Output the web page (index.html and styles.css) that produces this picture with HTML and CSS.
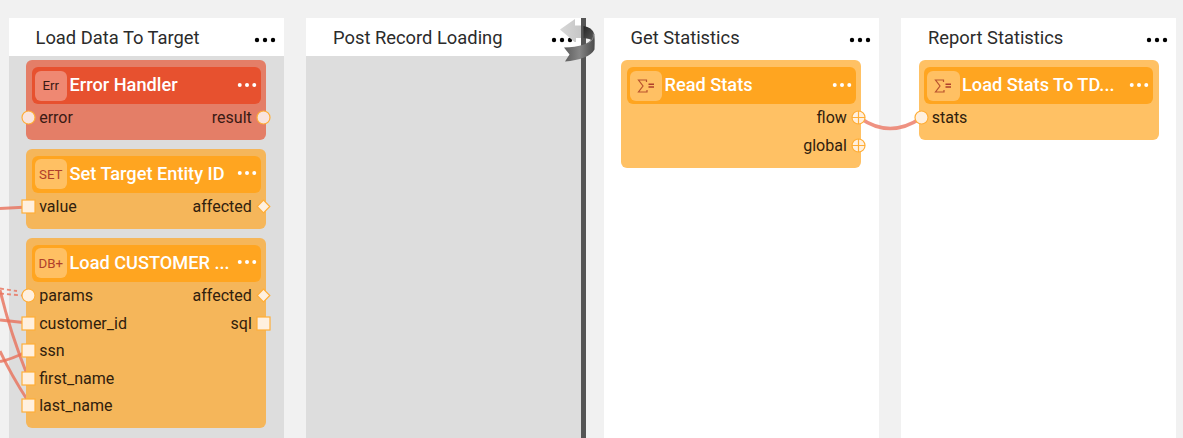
FILE: index.html
```html
<!DOCTYPE html>
<html lang="en">
<head>
<meta charset="utf-8">
<title>Flow stages</title>
<link rel="stylesheet" href="styles.css">
</head>
<body>
<svg class="defs" width="0" height="0" aria-hidden="true">
  <defs>
    <symbol id="dots" viewBox="0 0 22 6"><circle cx="3" cy="3" r="2.2"/><circle cx="11" cy="3" r="2.2"/><circle cx="19" cy="3" r="2.2"/></symbol>
    <symbol id="round" viewBox="0 0 15 15"><circle cx="7.5" cy="7.5" r="6.5"/></symbol>
    <symbol id="square" viewBox="0 0 15 15"><rect x="1" y="1" width="13" height="13"/></symbol>
    <symbol id="diamond" viewBox="0 0 15 15"><path d="M7.5 1.2 13.8 7.5 7.5 13.8 1.2 7.5Z"/></symbol>
    <symbol id="cross" viewBox="0 0 15 15"><circle cx="7.5" cy="7.5" r="6.5"/><path d="M7.5 1V14M1 7.5H14"/></symbol>
  </defs>
</svg>
<main class="board">
  <svg class="links" width="1183" height="438" viewBox="0 0 1183 438">
    <path d="M0 208.5 28 207"/>
    <path class="thin" d="M0 288.5 17 291M0 293.5 22 295.5"/>
    <path d="M0 320 28 323"/>
    <path d="M0 361.500Q10 360 28 351"/>
    <path d="M0 290Q10 332 28 377"/>
    <path d="M0 351Q10 373 28 401"/>
    <path class="curve" d="M860 118Q890 139 921 118"/>
  </svg>

  <section class="stage shaded">
    <header class="stage-head"><h2 class="stage-title">Load Data To Target</h2><svg class="dots"><use href="#dots"/></svg></header>
    <div class="stage-body">
      <article class="card error">
        <header class="card-head"><span class="badge">Err</span><h3 class="card-title">Error Handler</h3><svg class="dots"><use href="#dots"/></svg></header>
        <div class="row"><svg class="port"><use href="#round"/></svg><span>error</span><span class="out">result</span><svg class="port"><use href="#round"/></svg></div>
      </article>
      <article class="card">
        <header class="card-head"><span class="badge">SET</span><h3 class="card-title">Set Target Entity ID</h3><svg class="dots"><use href="#dots"/></svg></header>
        <div class="row"><svg class="port"><use href="#square"/></svg><span>value</span><span class="out">affected</span><svg class="port"><use href="#diamond"/></svg></div>
      </article>
      <article class="card">
        <header class="card-head"><span class="badge">DB+</span><h3 class="card-title">Load CUSTOMER ...</h3><svg class="dots"><use href="#dots"/></svg></header>
        <div class="row"><svg class="port"><use href="#round"/></svg><span>params</span><span class="out">affected</span><svg class="port"><use href="#diamond"/></svg></div>
        <div class="row"><svg class="port"><use href="#square"/></svg><span>customer_id</span><span class="out">sql</span><svg class="port"><use href="#square"/></svg></div>
        <div class="row"><svg class="port"><use href="#square"/></svg><span>ssn</span></div>
        <div class="row"><svg class="port"><use href="#square"/></svg><span>first_name</span></div>
        <div class="row"><svg class="port"><use href="#square"/></svg><span>last_name</span></div>
      </article>
    </div>
  </section>

  <section class="stage shaded">
    <header class="stage-head"><h2 class="stage-title">Post Record Loading</h2><svg class="dots"><use href="#dots"/></svg></header>
    <div class="stage-body"></div>
    <svg class="ribbon" width="38" height="438" viewBox="558 0 38 438">
      <defs>
        <linearGradient id="back" x1="0" x2="1"><stop offset="0" stop-color="#d8d8d8"/><stop offset="1" stop-color="#c4c4c4"/></linearGradient>
        <linearGradient id="front" x1="0" x2="1"><stop offset="0" stop-color="#5c5c5c"/><stop offset=".5" stop-color="#868686"/><stop offset="1" stop-color="#4a4a4a"/></linearGradient>
        <linearGradient id="fold" x1="0" x2="1" y2="1"><stop offset="0" stop-color="#252525"/><stop offset="1" stop-color="#5c5c5c"/></linearGradient>
      </defs>
      <path fill="url(#back)" d="M560 29.500 575 19V25.500H583V38H576V42H574.500Z"/>
      <path fill="#555" d="M581 18H586V438H581Z"/>
      <path fill="url(#fold)" d="M583.500 26Q592 27 594.300 34L593 41Q590 38.500 583.500 38Z"/>
      <path fill="url(#front)" d="M594.200 34Q595 38 594.500 49.500Q592 54.500 584 57.500Q576 60.500 565 61.500L569.500 54.500 564 47.500Q575 47.500 584 44.500Q592 41.500 592.700 36Z"/>
      <path fill="none" stroke="#999" stroke-width=".7" d="M593.300 33.500Q594.500 40 588 43"/>
    </svg>
  </section>

  <section class="stage">
    <header class="stage-head"><h2 class="stage-title">Get Statistics</h2><svg class="dots"><use href="#dots"/></svg></header>
    <div class="stage-body">
      <article class="card">
        <header class="card-head"><span class="badge"><svg width="18" height="14" viewBox="0 0 18 14"><path d="M9.500 3V1H1.500L6 7 1.500 13H10V11"/><path class="eq" d="M11.500 5.200H17M11.500 8H17"/></svg></span><h3 class="card-title">Read Stats</h3><svg class="dots"><use href="#dots"/></svg></header>
        <div class="row"><span class="out">flow</span><svg class="port"><use href="#cross"/></svg></div>
        <div class="row"><span class="out">global</span><svg class="port"><use href="#cross"/></svg></div>
      </article>
    </div>
  </section>

  <section class="stage">
    <header class="stage-head"><h2 class="stage-title">Report Statistics</h2><svg class="dots"><use href="#dots"/></svg></header>
    <div class="stage-body">
      <article class="card">
        <header class="card-head"><span class="badge"><svg width="18" height="14" viewBox="0 0 18 14"><path d="M9.500 3V1H1.500L6 7 1.500 13H10V11"/><path class="eq" d="M11.500 5.200H17M11.500 8H17"/></svg></span><h3 class="card-title">Load Stats To TD...</h3><svg class="dots"><use href="#dots"/></svg></header>
        <div class="row"><svg class="port"><use href="#round"/></svg><span>stats</span></div>
      </article>
    </div>
  </section>
</main>
</body>
</html>
```
FILE: styles.css
```css
* { box-sizing: border-box; }
body { margin: 0; background: #f1f1f1; font-family: Roboto, "Liberation Sans", sans-serif; overflow: hidden; }
h2, h3 { margin: 0; }
.defs { position: absolute; }
.board { position: relative; display: flex; gap: 22.5px; width: 1183px; height: 438px; padding: 18px 0 0 8.5px; }
.stage { position: relative; flex: 0 0 275px; height: 420px; background: #fff; }
.stage-head { display: flex; align-items: center; justify-content: space-between; height: 37.500px; padding: 2px 8px 0 27px; background: #fff; }
.stage-title { font-size: 18.350px; font-weight: 400; line-height: 24px; color: #2b2b2b; white-space: nowrap; }
.stage-head .dots { margin-top: 4px; fill: #000; }
.dots { width: 22px; height: 6px; flex: none; }
.stage-body { display: flex; flex-direction: column; gap: 9px; height: 382.500px; padding: 4.800px 17.500px; }
.shaded .stage-body { background: #ddd; }
.shaded .card { background: #f5b65a; }

.links { position: absolute; left: 0; top: 0; z-index: 1; fill: none; stroke: #e8705a; stroke-opacity: .8; stroke-width: 3; }
.links .thin { stroke-width: 1.800; stroke-dasharray: 4 3; }
.links .curve { stroke: #ec7f6c; stroke-opacity: .85; stroke-width: 3.500; }

.card { position: relative; z-index: 2; width: 240px; padding: 7px 5.500px 8.400px; border-radius: 6px; background: #ffc164; }
.shaded .card.error { background: #e47e67; }
.card-head { display: flex; align-items: center; height: 36.800px; padding: 0 3.600px 0 3px; border-radius: 6px; background: #ffa520; }
.error .card-head { background: #e7512f; }
.badge { display: flex; align-items: center; justify-content: center; flex: none; width: 32.500px; height: 30px; border-radius: 6px; background: #ffc063; color: #b03f2b; font-size: 13.300px; }
.error .badge { background: #ef8872; color: #3a1a14; }
.badge svg { fill: none; stroke: #b9532f; stroke-width: 1.200; }
.badge .eq { stroke: #b03f2b; stroke-width: 1.600; }
.card-title { flex: 1; padding-left: 2.500px; font-size: 18.200px; font-weight: 500; line-height: 22px; margin-top: -1px; color: #fff; white-space: nowrap; }
.card-head .dots { fill: #fff; width: 20px; margin-top: -2px; }
.row { display: flex; align-items: center; height: 27.600px; gap: 3.200px; margin: 0 -10.500px; font-size: 16px; color: #30200d; }
.error .row { color: #3a1a14; }
.out { margin-left: auto; margin-right: 1px; }
.port { flex: none; width: 15px; height: 15px; fill: #fff0df; stroke: #ffae38; stroke-width: 1.200; }
.error .port { fill: #f9e4de; }
.ribbon { position: absolute; left: 252px; top: -18px; z-index: 3; }
```
